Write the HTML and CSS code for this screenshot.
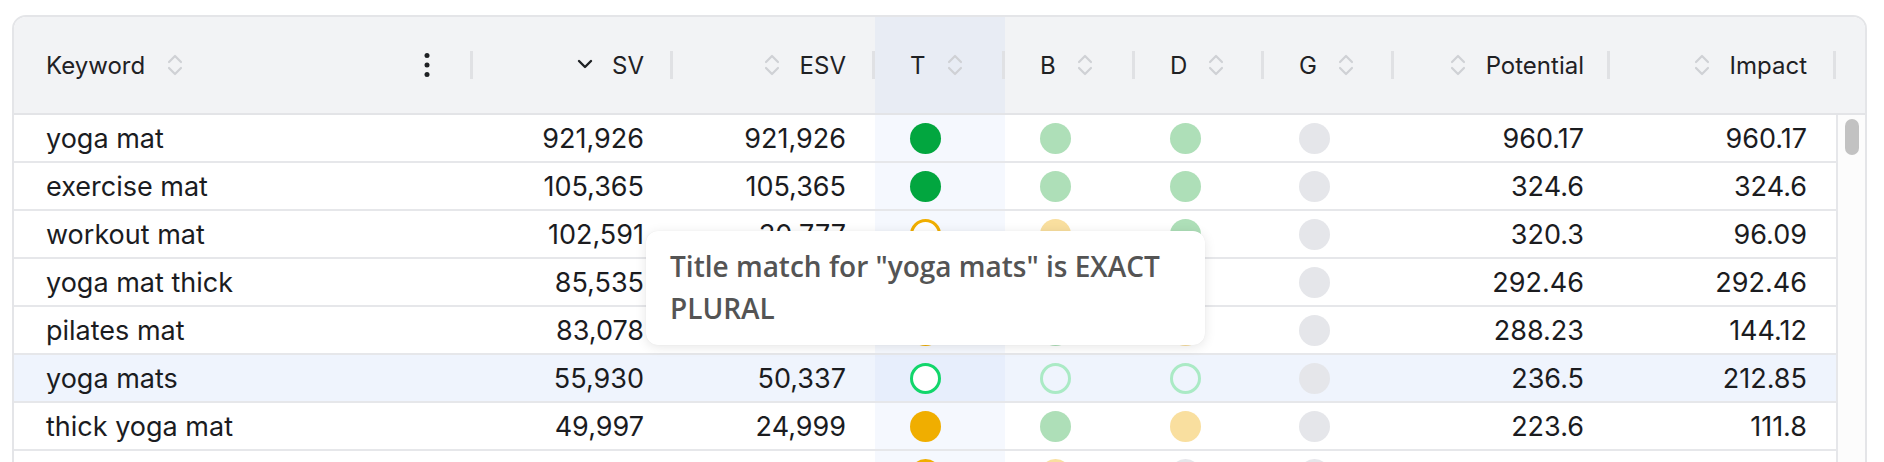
FILE: index.html
```html
<!DOCTYPE html>
<html lang="en">
<head>
<meta charset="utf-8">
<title>Keywords</title>
<link rel="stylesheet" href="styles.css">
</head>
<body>
<div class="card">
  <div class="thead">
    <div class="th th-kw">
      <span class="label">Keyword</span>
      <svg class="sort" viewBox="0 0 18 26" width="18" height="26"><path d="M3 10 L9 4 L15 10"/><path d="M3 16 L9 22 L15 16"/></svg>
      <svg class="kebab" viewBox="0 0 6 26" width="6" height="26"><circle cx="3" cy="3.5" r="2.5"/><circle cx="3" cy="13" r="2.5"/><circle cx="3" cy="22.5" r="2.5"/></svg>
      <span class="sep"></span>
    </div>
    <div class="th th-right">
      <svg class="active" viewBox="0 0 16 10" width="16" height="10"><path d="M2 2 L8 8 L14 2"/></svg>
      <span class="label">SV</span>
      <span class="sep"></span>
    </div>
    <div class="th th-right">
      <svg class="sort" viewBox="0 0 18 26" width="18" height="26"><path d="M3 10 L9 4 L15 10"/><path d="M3 16 L9 22 L15 16"/></svg>
      <span class="label">ESV</span>
      <span class="sep"></span>
    </div>
    <div class="th th-left th-t">
      <span class="label">T</span>
      <svg class="sort" viewBox="0 0 18 26" width="18" height="26"><path d="M3 10 L9 4 L15 10"/><path d="M3 16 L9 22 L15 16"/></svg>
      <span class="sep"></span>
    </div>
    <div class="th th-left">
      <span class="label">B</span>
      <svg class="sort" viewBox="0 0 18 26" width="18" height="26"><path d="M3 10 L9 4 L15 10"/><path d="M3 16 L9 22 L15 16"/></svg>
      <span class="sep"></span>
    </div>
    <div class="th th-left">
      <span class="label">D</span>
      <svg class="sort" viewBox="0 0 18 26" width="18" height="26"><path d="M3 10 L9 4 L15 10"/><path d="M3 16 L9 22 L15 16"/></svg>
      <span class="sep"></span>
    </div>
    <div class="th th-left">
      <span class="label">G</span>
      <svg class="sort" viewBox="0 0 18 26" width="18" height="26"><path d="M3 10 L9 4 L15 10"/><path d="M3 16 L9 22 L15 16"/></svg>
      <span class="sep"></span>
    </div>
    <div class="th th-right th-pot">
      <svg class="sort" viewBox="0 0 18 26" width="18" height="26"><path d="M3 10 L9 4 L15 10"/><path d="M3 16 L9 22 L15 16"/></svg>
      <span class="label">Potential</span>
      <span class="sep"></span>
    </div>
    <div class="th th-right">
      <svg class="sort" viewBox="0 0 18 26" width="18" height="26"><path d="M3 10 L9 4 L15 10"/><path d="M3 16 L9 22 L15 16"/></svg>
      <span class="label">Impact</span>
      <span class="sep"></span>
    </div>
    <div class="th th-end"></div>
  </div>

  <div class="tbody">
    <div class="rows">
      <div class="row">
        <div class="td kw">yoga mat</div>
        <div class="td num">921,926</div>
        <div class="td num">921,926</div>
        <div class="td dc tcol"><span class="dot g-strong"></span></div>
        <div class="td dc"><span class="dot g-soft"></span></div>
        <div class="td dc"><span class="dot g-soft"></span></div>
        <div class="td dc"><span class="dot gray"></span></div>
        <div class="td num pot">960.17</div>
        <div class="td num">960.17</div>
      </div>
      <div class="row">
        <div class="td kw">exercise mat</div>
        <div class="td num">105,365</div>
        <div class="td num">105,365</div>
        <div class="td dc tcol"><span class="dot g-strong"></span></div>
        <div class="td dc"><span class="dot g-soft"></span></div>
        <div class="td dc"><span class="dot g-soft"></span></div>
        <div class="td dc"><span class="dot gray"></span></div>
        <div class="td num pot">324.6</div>
        <div class="td num">324.6</div>
      </div>
      <div class="row">
        <div class="td kw">workout mat</div>
        <div class="td num">102,591</div>
        <div class="td num">30,777</div>
        <div class="td dc tcol"><span class="dot ring-o"></span></div>
        <div class="td dc"><span class="dot o-soft"></span></div>
        <div class="td dc"><span class="dot g-soft"></span></div>
        <div class="td dc"><span class="dot gray"></span></div>
        <div class="td num pot">320.3</div>
        <div class="td num">96.09</div>
      </div>
      <div class="row">
        <div class="td kw">yoga mat thick</div>
        <div class="td num">85,535</div>
        <div class="td num">85,535</div>
        <div class="td dc tcol"><span class="dot g-strong"></span></div>
        <div class="td dc"><span class="dot g-soft"></span></div>
        <div class="td dc"><span class="dot g-soft"></span></div>
        <div class="td dc"><span class="dot gray"></span></div>
        <div class="td num pot">292.46</div>
        <div class="td num">292.46</div>
      </div>
      <div class="row">
        <div class="td kw">pilates mat</div>
        <div class="td num">83,078</div>
        <div class="td num">41,539</div>
        <div class="td dc tcol"><span class="dot o-strong"></span></div>
        <div class="td dc"><span class="dot g-soft"></span></div>
        <div class="td dc"><span class="dot o-soft"></span></div>
        <div class="td dc"><span class="dot gray"></span></div>
        <div class="td num pot">288.23</div>
        <div class="td num">144.12</div>
      </div>
      <div class="row sel">
        <div class="td kw">yoga mats</div>
        <div class="td num">55,930</div>
        <div class="td num">50,337</div>
        <div class="td dc tcol"><span class="dot ring-g"></span></div>
        <div class="td dc"><span class="dot ring-gs"></span></div>
        <div class="td dc"><span class="dot ring-gs"></span></div>
        <div class="td dc"><span class="dot gray"></span></div>
        <div class="td num pot">236.5</div>
        <div class="td num">212.85</div>
      </div>
      <div class="row">
        <div class="td kw">thick yoga mat</div>
        <div class="td num">49,997</div>
        <div class="td num">24,999</div>
        <div class="td dc tcol"><span class="dot o-strong"></span></div>
        <div class="td dc"><span class="dot g-soft"></span></div>
        <div class="td dc"><span class="dot o-soft"></span></div>
        <div class="td dc"><span class="dot gray"></span></div>
        <div class="td num pot">223.6</div>
        <div class="td num">111.8</div>
      </div>
      <div class="row">
        <div class="td kw">non slip yoga mat</div>
        <div class="td num">40,500</div>
        <div class="td num">20,250</div>
        <div class="td dc tcol"><span class="dot o-strong"></span></div>
        <div class="td dc"><span class="dot o-soft"></span></div>
        <div class="td dc"><span class="dot gray"></span></div>
        <div class="td dc"><span class="dot gray"></span></div>
        <div class="td num pot">181.4</div>
        <div class="td num">90.7</div>
      </div>
    </div>
    <div class="scroll"><div class="thumb"></div></div>
  </div>
</div>

<div class="tooltip">Title match for "yoga mats" is EXACT PLURAL</div>
</body>
</html>
```

FILE: styles.css
```css
html, body {
  margin: 0;
  padding: 0;
  overflow: hidden;
  background: #ffffff;
}
body {
  position: relative;
  width: 1884px;
  height: 462px;
  font-family: "Inter", "Liberation Sans", sans-serif;
  color: #1c1d20;
}
.card {
  box-sizing: border-box;
  margin: 15px 0 0 12px;
  width: 1855px;
  border: 2px solid #e4e5e8;
  border-radius: 14px;
  overflow: hidden;
  background: #fff;
}
.thead {
  display: grid;
  grid-template-columns: 459px 200px 202px 130px 130px 129px 130px 216px 226px 1fr;
  background: #f2f3f5;
  border-bottom: 2px solid #e3e4e7;
}
.th {
  display: flex;
  align-items: center;
  height: 96px;
  font-size: 24px;
  color: #1f2124;
}
.th .sep {
  width: 3px;
  height: 28px;
  background: #e0e1e4;
  flex: none;
}
.th-kw { padding-left: 32px; }
.th-kw .sort { margin-left: 21px; }
.th-kw .kebab { margin-left: auto; margin-right: 40px; fill: #1f2124; }
.th-left { padding-left: 35px; }
.th-left .sort { margin-left: 20px; }
.th-left .sep { margin-left: auto; }
.th-right { justify-content: flex-end; }
.th-right .sort, .th-right .active { margin-right: 19px; }
.th-right .label { margin-right: 26px; }
.th-pot .label { margin-right: 23px; }
.th-t { background: #e8ecf4; }
.sort {
  fill: none;
  stroke: #cfd1d5;
  stroke-width: 2.2;
  stroke-linecap: round;
  stroke-linejoin: round;
  flex: none;
}
.active {
  fill: none;
  stroke: #1f2124;
  stroke-width: 2.4;
  stroke-linecap: round;
  stroke-linejoin: round;
  flex: none;
  margin-top: -3px;
}

.tbody {
  display: flex;
}
.rows {
  width: 1822px;
  flex: none;
}
.row {
  display: grid;
  grid-template-columns: 459px 200px 202px 130px 130px 129px 130px 216px 226px;
  height: 48px;
  box-sizing: border-box;
  border-bottom: 2px solid #e6e7ea;
}
.row.sel { background: #eff4fd; }
.td {
  display: flex;
  align-items: center;
  font-size: 27px;
  color: #1b1c1f;
  white-space: nowrap;
}
.td.kw { padding-left: 32px; }
.td.num { justify-content: flex-end; padding-right: 29px; }
.td.num.pot { padding-right: 26px; }
.td.dc { padding-left: 35px; }
.td.tcol { background: #f5f8fe; }
.row.sel .td.tcol { background: #e7eefc; }

.dot {
  display: block;
  box-sizing: border-box;
  width: 31px;
  height: 31px;
  border-radius: 50%;
}
.g-strong { background: #02a63f; }
.g-soft { background: #aedfb8; }
.o-strong { background: #f0ae00; }
.o-soft { background: #f9df9f; }
.gray { background: #e5e6ea; }
.ring-o { border: 3px solid #f0ae00; background: #ffffff; }
.ring-g { border: 3px solid #12d66b; background: #ffffff; }
.ring-gs { border: 3px solid #aaeac5; background: transparent; }

.scroll {
  flex: 1;
  border-left: 2px solid #e6e7ea;
  background: #fcfcfc;
  padding: 4px 0 0 7px;
  min-height: 360px;
}
.thumb {
  width: 14px;
  height: 36px;
  border-radius: 7px;
  background: #c2c2c2;
}

.tooltip {
  position: absolute;
  left: 646px;
  top: 231px;
  box-sizing: border-box;
  width: 559px;
  padding: 14px 24px 16px;
  background: #ffffff;
  border-radius: 12px;
  box-shadow: 0 2px 12px rgba(0, 0, 0, 0.10), 0 0 1px rgba(0, 0, 0, 0.08);
  font-family: "Open Sans", "Noto Sans", sans-serif;
  font-weight: 600;
  font-size: 28px;
  line-height: 42px;
  color: #545454;
}
```
